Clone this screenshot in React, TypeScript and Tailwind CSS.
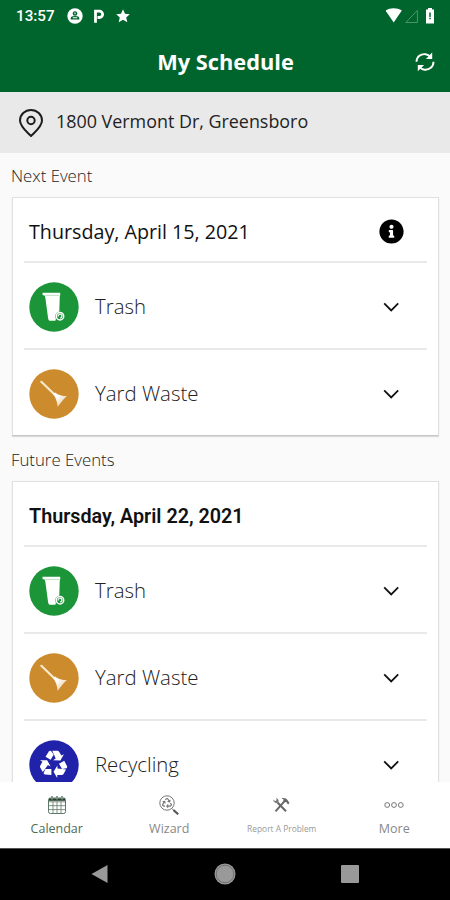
import { type FC, type ReactNode } from "react";
import { FaInfoCircle, FaRecycle } from "react-icons/fa";

const TrashIcon: FC = () => (
  <svg viewBox="0 0 50 50" className="h-[50px] w-[50px]">
    <circle cx="25" cy="25" r="24.7" fill="#1c9438" />
    <path d="M13.5 10.8h17.700v3h-.4l-.5 15.700a4.800 4.800 0 0 0-3.300 7.300l-.7 2h-5.500c-1-.3-1.500-1.400-1.700-2.600L16.400 16.200l-.6-2.500-2.200-.8z" fill="#fff" />
    <path d="M15.500 13.400h15" stroke="#9fd3aa" strokeWidth=".7" />
    <circle cx="31" cy="34.2" r="3.700" fill="#1c9438" stroke="#fff" strokeWidth="1.500" />
    <path d="M29.200 34.600a1.900 1.900 0 1 1 1.900 1.400" fill="none" stroke="#fff" strokeWidth="1.200" />
  </svg>
);

const RakeIcon: FC = () => (
  <svg viewBox="0 0 50 50" className="h-[50px] w-[50px]">
    <defs>
      <linearGradient id="rake" x1="0" y1="0" x2="1" y2="1">
        <stop offset="0.3" stopColor="#fff" />
        <stop offset="1" stopColor="#e3bb83" />
      </linearGradient>
    </defs>
    <circle cx="25" cy="25" r="24.7" fill="#cc8b2c" />
    <path d="M12.300 12.800l13.500 12.900" stroke="#fae9cf" strokeWidth="2.200" strokeLinecap="round" />
    <path d="M23.900 24.800l2.200-1.400c3.200 2.900 7 3.500 11.700 3.600l-4 4.300-5.100 6.500c-.5-3.300-.9-7.800-4.800-13z" fill="url(#rake)" />
  </svg>
);

const RecycleArrow: FC<{ angle: number }> = ({ angle }) => (
  <g transform={`rotate(${angle})`}>
    <path d="M-8.200-7.400L-4.900-12.500Q-4.300-13.400-2.800-13.300L0-9.600-3-4.400z" />
    <path d="M-1.400-13.400H3.600Q4.800-13.400 5.400-12.300L7.700-8.600 10.200-9.900 6.700-3.700-.6-3.900 2-5.500z" />
  </g>
);

const RecycleIcon: FC = () => (
  <svg viewBox="-25 -25 50 50" className="h-[50px] w-[50px]">
    <circle r="24.7" fill="#2023aa" />
    <g fill="#fff" transform="translate(-.3 -.9)">
      <RecycleArrow angle={0} />
      <RecycleArrow angle={120} />
      <RecycleArrow angle={240} />
    </g>
  </svg>
);

const Chevron: FC = () => (
  <svg viewBox="0 0 16 10" className="mr-7 h-[10px] w-4" fill="none" stroke="#111" strokeWidth="1.8">
    <path d="M1.200 1.400l7 7 7-7" />
  </svg>
);

const Row: FC<{ icon: ReactNode; title: string }> = ({ icon, title }) => (
  <div className="flex h-[87px] items-center border-t-2 border-[#e9e9e9] pt-[3px] pl-[5px]">
    {icon}
    <span className="ml-4 flex-1 pb-px text-[20.4px] font-light text-[#222]">{title}</span>
    <Chevron />
  </div>
);

const Card: FC<{ header: ReactNode; children: ReactNode }> = ({ header, children }) => (
  <div className="mr-[11px] ml-3 shrink-0 border border-[#e0e0e0] border-b-[#c6c6c6] bg-white px-[11px] shadow-[0_1px_1px_rgba(0,0,0,0.12)]">
    <div className="flex h-[63px] items-center justify-between pt-1 pr-[23px] pl-[5px]">{header}</div>
    {children}
  </div>
);

const Tab: FC<{ icon: ReactNode; label: ReactNode }> = ({ icon, label }) => (
  <div className="flex flex-1 flex-col items-center pt-[11px] pl-px">
    <div className="flex h-6 items-center justify-center">{icon}</div>
    <div className="flex h-6 items-center whitespace-nowrap">{label}</div>
  </div>
);

const StatusBar: FC = () => (
  <div className="flex h-8 items-center pl-4 text-white">
    <span className="w-[39px] pt-px font-['Roboto'] text-[15.2px] font-medium">13:57</span>
    <svg viewBox="0 0 16 16" className="ml-3 h-4 w-4">
      <circle cx="8" cy="8" r="7.700" fill="#fff" />
      <circle cx="8" cy="5.500" r="2.300" fill="#00652d" />
      <path d="M3.700 11.500V10c0-1.200 1.500-2 4.300-2s4.300.8 4.300 2v1.500z" fill="#00652d" />
      <path d="M5.800 9.700h4.400M8 4.600v1.600" stroke="#fff" strokeWidth="1.100" />
    </svg>
    <svg viewBox="0 0 12 14" className="ml-[10px] h-[14px] w-3" fill="none" stroke="#fff" strokeWidth="2.800">
      <path d="M2.500 13.800V2.200h4a3 3 0 0 1 0 6.300H4.500" />
    </svg>
    <svg viewBox="0 0 14 14" className="ml-[11px] h-[14px] w-[14px]" fill="#fff">
      <path d="M7 .3l2 4.400 4.800.5-3.600 3.200 1.100 4.900L7 10.800l-4.300 2.500 1.100-4.900L.2 5.200 5 4.700z" />
    </svg>
    <svg viewBox="0 0 48 16" className="mr-4 ml-auto h-4 w-12" fill="none">
      <path d="M-.5 2.600C3.500-.6 11.500-.6 15.800 2.600L7.700 14.600z" fill="#fff" />
      <path d="M31.400 2.300v12.200H19.800z" stroke="#4c9567" strokeWidth="1" />
      <path d="M42 1.600V0h4v1.600h2V15.500h-8V1.600z" fill="#fff" />
      <path d="M44 4.500v4.500M44 9.800v1.400" stroke="#00652d" strokeWidth="1.500" />
    </svg>
  </div>
);

const RefreshIcon: FC = () => (
  <svg viewBox="0 0 20 20" className="h-5 w-5" fill="none" stroke="#fff" strokeWidth="1.900">
    <path d="M1.500 9.800C1.600 4.700 6 1.600 10.500 2.200c2 .3 3.700 1.200 5 2.600" />
    <path d="M18.500 9.700c0 5.200-4.300 8.500-8.900 8-2.100-.3-3.900-1.200-5.200-2.700" />
    <path d="M17.200.6v6.300h-6.300zM2.800 19.300V13h6.300z" fill="#fff" stroke="none" />
  </svg>
);

const PinIcon: FC = () => (
  <svg viewBox="0 0 24 28" className="h-7 w-6" fill="none" stroke="#1d1d1d" strokeWidth="2">
    <path d="M12 27C7.500 22.500 1 17.600 1 11.500a11 10.500 0 0 1 22 0C23 17.600 16.500 22.500 12 27z" />
    <circle cx="12" cy="11.500" r="3.700" />
  </svg>
);

const CalendarIcon: FC = () => (
  <svg viewBox="0 0 20 20" className="h-5 w-5" fill="none" stroke="#5f7967" strokeWidth="1">
    <rect x="1.500" y="3" width="17" height="15.500" rx="1.800" />
    <path d="M2 6.800h16M2 10.700h16M2 14.600h16M6 6.800v11.700M10 6.800v11.700M14 6.800v11.700" strokeWidth=".8" />
    <path d="M2 4.600h16" stroke="#26412e" strokeWidth="2.400" />
    <path d="M5 1v3.500M10 1v3.500M15 1v3.500" stroke="#7d9484" strokeWidth="1.800" />
  </svg>
);

const WizardIcon: FC = () => (
  <div className="relative h-5 w-5">
    <svg viewBox="0 0 20 20" className="h-5 w-5" fill="none" stroke="#777">
      <circle cx="8" cy="8" r="7.200" />
      <path d="M12.800 13.400l1.800 1.800" />
      <path d="M14.400 15l4.800 4.300" stroke="#555" strokeWidth="2.100" />
    </svg>
    <FaRecycle className="absolute top-[3px] left-[3px] h-[10px] w-[10px] text-[#777]" />
  </div>
);

const ToolsIcon: FC = () => (
  <svg viewBox="0 0 18 16" className="-mt-px mr-px h-4 w-[18px]" fill="none" stroke="#666">
    <path d="M5.500 5.500l8.500 8.700" strokeWidth="2" />
    <path d="M1.200 2.400l2 1.800 1.400-1.100L4 .9a3.500 3.500 0 0 1 2.300 4.500A3.400 3.400 0 0 1 1.200 2.400z" fill="#777" stroke="none" />
    <path d="M3.500 14.300L13 3.600" strokeWidth="2" />
    <path d="M9.500 1.300c2.500-.8 4.800-.2 6 1.700l2 2.900-1.500 1.500-1.800-2.300-1.500.2-1.400-1.500.4-1.200z" fill="#666" stroke="none" />
  </svg>
);

const MoreIcon: FC = () => (
  <svg viewBox="0 0 20 8" className="h-2 w-5" fill="none" stroke="#777">
    <circle cx="3.200" cy="4" r="2.400" />
    <circle cx="10" cy="4" r="2.400" />
    <circle cx="16.800" cy="4" r="2.400" />
  </svg>
);

const App: FC = () => {
  return (
    <div className="flex h-[900px] w-[450px] flex-col overflow-hidden bg-[#fafafa] font-['Open_Sans',sans-serif]">
      <header className="h-[92px] shrink-0 bg-[#00652d]">
        <StatusBar />
        <div className="grid h-[60px] grid-cols-[1fr_auto_1fr] items-center pr-[15px]">
          <h1 className="col-start-2 pl-4 text-[21.8px] font-bold text-white">My Schedule</h1>
          <div className="justify-self-end">
            <RefreshIcon />
          </div>
        </div>
      </header>

      <div className="flex h-[61px] shrink-0 items-center gap-[13px] bg-[#e9e9e9] pl-[19px]">
        <PinIcon />
        <span className="pb-[2px] text-[17.9px] text-[#222]">1800 Vermont Dr, Greensboro</span>
      </div>

      <main className="flex min-h-0 flex-1 flex-col overflow-hidden">
        <h2 className="flex h-11 shrink-0 items-center pt-[2px] pl-[11px] text-[16.8px] font-light text-[#222]">Next Event</h2>
        <Card
          header={
            <>
              <span className="text-[19.7px] text-[#111]">Thursday, April 15, 2021</span>
              <FaInfoCircle className="h-[25px] w-[25px] text-black" />
            </>
          }
        >
          <Row icon={<TrashIcon />} title="Trash" />
          <Row icon={<RakeIcon />} title="Yard Waste" />
        </Card>

        <h2 className="flex h-[45px] shrink-0 items-center pt-[2px] pl-[11px] text-[16.8px] font-light text-[#222]">Future Events</h2>
        <Card
          header={<span className="pt-[2px] font-['Roboto'] text-[19.75px] font-semibold text-[#111]">Thursday, April 22, 2021</span>}
        >
          <Row icon={<TrashIcon />} title="Trash" />
          <Row icon={<RakeIcon />} title="Yard Waste" />
          <Row icon={<RecycleIcon />} title="Recycling" />
        </Card>
      </main>

      <nav className="flex h-[66px] shrink-0 bg-white">
        <Tab icon={<CalendarIcon />} label={<span className="text-[12.5px] text-[#4d6b56]">Calendar</span>} />
        <Tab icon={<WizardIcon />} label={<span className="text-[12.5px] text-[#888]">Wizard</span>} />
        <Tab icon={<ToolsIcon />} label={<span className="text-[8.4px] text-[#999]">Report A Problem</span>} />
        <Tab icon={<MoreIcon />} label={<span className="text-[12.5px] text-[#888]">More</span>} />
      </nav>

      <div className="flex h-[52px] shrink-0 items-center justify-between border-t border-[#555] bg-black px-[91px] pb-px">
        <svg viewBox="0 0 18 20" className="h-5 w-[18px]">
          <path d="M.5 10L16.500 1v18z" fill="#999" />
        </svg>
        <svg viewBox="0 0 22 22" className="h-[22px] w-[22px]">
          <circle cx="11" cy="11" r="10.500" fill="#999" />
          <circle cx="11" cy="11" r="8.800" fill="none" stroke="#666" strokeWidth=".8" />
        </svg>
        <div className="h-[18px] w-[18px] rounded-[1px] bg-[#999]" />
      </div>
    </div>
  );
};

export default App;
